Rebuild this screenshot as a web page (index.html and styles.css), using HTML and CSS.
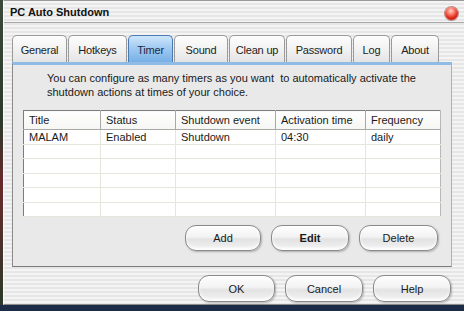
FILE: index.html
```html
<!DOCTYPE html>
<html>
<head>
<meta charset="utf-8">
<link rel="stylesheet" href="styles.css">
</head>
<body>
<div class="screen">
  <div class="desk-left"></div>
  <div class="window">
    <div class="titlebar">
      <span class="title">PC Auto Shutdown</span>
      <span class="close"></span>
    </div>
    <div class="content">
      <div class="tabs">
        <div class="tab t1">General</div>
        <div class="tab t2">Hotkeys</div>
        <div class="tab t3 active">Timer</div>
        <div class="tab t4">Sound</div>
        <div class="tab t5">Clean up</div>
        <div class="tab t6">Password</div>
        <div class="tab t7">Log</div>
        <div class="tab t8">About</div>
      </div>
      <div class="panel">
        <p class="intro">You can configure as many timers as you want&nbsp; to automatically activate the shutdown actions at times of your choice.</p>
        <table class="grid">
          <colgroup>
            <col class="c1"><col class="c2"><col class="c3"><col class="c4"><col class="c5">
          </colgroup>
          <thead>
            <tr><th>Title</th><th>Status</th><th>Shutdown event</th><th>Activation time</th><th>Frequency</th></tr>
          </thead>
          <tbody>
            <tr><td>MALAM</td><td>Enabled</td><td>Shutdown</td><td>04:30</td><td>daily</td></tr>
            <tr><td></td><td></td><td></td><td></td><td></td></tr>
            <tr><td></td><td></td><td></td><td></td><td></td></tr>
            <tr><td></td><td></td><td></td><td></td><td></td></tr>
            <tr><td></td><td></td><td></td><td></td><td></td></tr>
            <tr><td></td><td></td><td></td><td></td><td></td></tr>
          </tbody>
        </table>
        <div class="row-buttons">
          <button class="btn">Add</button>
          <button class="btn bold">Edit</button>
          <button class="btn">Delete</button>
        </div>
      </div>
      <div class="dialog-buttons">
        <button class="btn">OK</button>
        <button class="btn">Cancel</button>
        <button class="btn">Help</button>
      </div>
    </div>
  </div>
</div>
</body>
</html>
```
FILE: styles.css
```css
* { box-sizing: border-box; }
html, body { margin: 0; padding: 0; }
body {
  width: 464px;
  height: 311px;
  overflow: hidden;
  background: #1c2c46;
  font-family: "Liberation Sans", Arial, sans-serif;
  font-size: 11px;
  color: #1a1a1a;
}
.screen {
  display: flex;
  height: 305px;
}
.desk-left {
  width: 3px;
  background: linear-gradient(#3b4a3a, #2a3a2a 40%, #6a2a2a 60%, #2a3a2a);
}
.window {
  flex: 1;
  display: flex;
  flex-direction: column;
  border-left: 1px solid #fafafa;
  border-top: 1px solid #9a9a9a;
  border-bottom: 1px solid #8c8c8c;
  background: repeating-linear-gradient(180deg, #f4f4f4 0px, #f4f4f4 2px, #e6e6e6 2px, #e6e6e6 4px);
}
.titlebar {
  height: 22px;
  display: flex;
  align-items: center;
  justify-content: space-between;
  padding: 0 6px 0 6px;
  border-bottom: 1px solid #a8a8a8;
}
.title {
  font-weight: bold;
  font-size: 11px;
  color: #111;
  padding-top: 1px;
}
.close {
  width: 13px;
  height: 13px;
  border-radius: 50%;
  margin-top: 3px;
  background: radial-gradient(circle at 45% 30%, #ffd6d0 0, #ff8a7a 25%, #e02a1a 60%, #a00c06 100%);
  box-shadow: 0 0 0 1px rgba(120, 20, 10, 0.45);
}
.content {
  display: flex;
  flex-direction: column;
  padding: 12px 0 0 8px;
}
.tabs {
  display: flex;
  gap: 1px;
  height: 27px;
  align-items: flex-end;
}
.tab {
  height: 27px;
  display: flex;
  align-items: center;
  justify-content: center;
  border: 1px solid #9a9a9a;
  border-bottom: none;
  border-radius: 5px 5px 0 0;
  background: linear-gradient(#fdfdfd, #f2f2f2 50%, #e4e4e4);
  color: #222;
  font-size: 11px;
  letter-spacing: -0.2px;
  padding-top: 1px;
}
.tab.active {
  border-color: #4a78b0;
  background: linear-gradient(#cfe6fb, #9cc8f0 50%, #78b0e6);
  color: #1a2a44;
}
.t1 { width: 55px; }
.t2 { width: 59px; }
.t3 { width: 45px; }
.t4 { width: 54px; }
.t5 { width: 56px; }
.t6 { width: 66px; }
.t7 { width: 37px; }
.t8 { width: 48px; }
.panel {
  width: 440px;
  height: 205px;
  background: #e9e9e9;
  border-top: 3px solid #8fbbe6;
  border-left: 1px solid #8a8a8a;
  border-right: 1px solid #b0b0b0;
  border-bottom: 1px solid #7a7a7a;
  padding: 6px 0 0 10px;
  display: flex;
  flex-direction: column;
}
.intro {
  margin: 0 0 0 24px;
  line-height: 14px;
  width: 370px;
  color: #1a1a1a;
}
.grid {
  margin-top: 11px;
  width: 417px;
  border-collapse: collapse;
  table-layout: fixed;
  background: #ffffff;
  border: 1px solid #7c7c7c;
  border-right-color: #b8b8b8;
  border-bottom-color: #b8b8b8;
}
.c1 { width: 77px; }
.c2 { width: 75px; }
.c3 { width: 100px; }
.c4 { width: 90px; }
.c5 { width: 75px; }
.grid th {
  height: 19px;
  text-align: left;
  font-weight: normal;
  padding: 0 0 0 5px;
  background: linear-gradient(#ffffff, #f6f6f3);
  border-right: 1px solid #a8a8a4;
  border-bottom: 1px solid #a8a8a4;
  color: #1a1a1a;
}
.grid th:last-child { border-right: none; }
.grid td {
  height: 14.4px;
  padding: 0 0 0 5px;
  border-right: 1px solid #e6e6dc;
  border-bottom: 1px solid #e6e6dc;
  line-height: 13px;
  color: #1a1a1a;
}
.grid td:last-child { border-right: none; }
.grid tbody tr:first-child td { height: 15px; }
.row-buttons {
  display: flex;
  justify-content: flex-end;
  gap: 10px;
  margin-top: 8px;
  padding-right: 13px;
}
.dialog-buttons {
  display: flex;
  justify-content: flex-end;
  gap: 10px;
  margin-top: 8px;
  padding-right: 13px;
}
.btn {
  width: 77px;
  height: 26px;
  border: 1px solid #8a8a8a;
  border-radius: 11px;
  background: linear-gradient(#fefefe, #f3f3f3 45%, #e2e2e2 55%, #eeeeee 85%, #f8f8f8);
  box-shadow: inset 0 1px 0 #ffffff, inset 0 -2px 3px rgba(255,255,255,0.8), 1px 1px 2px rgba(0,0,0,0.25);
  font-family: "Liberation Sans", Arial, sans-serif;
  font-size: 11px;
  color: #1a1a1a;
  padding: 0;
}
.btn.bold { font-weight: bold; }
.dialog-buttons .btn { height: 27px; width: 78px; }
.dialog-buttons .btn:first-child { width: 77px; }
.row-buttons .btn:first-child { width: 76px; }
.row-buttons .btn:nth-child(2) { width: 78px; }
.row-buttons .btn:nth-child(3) { width: 79px; }
```
